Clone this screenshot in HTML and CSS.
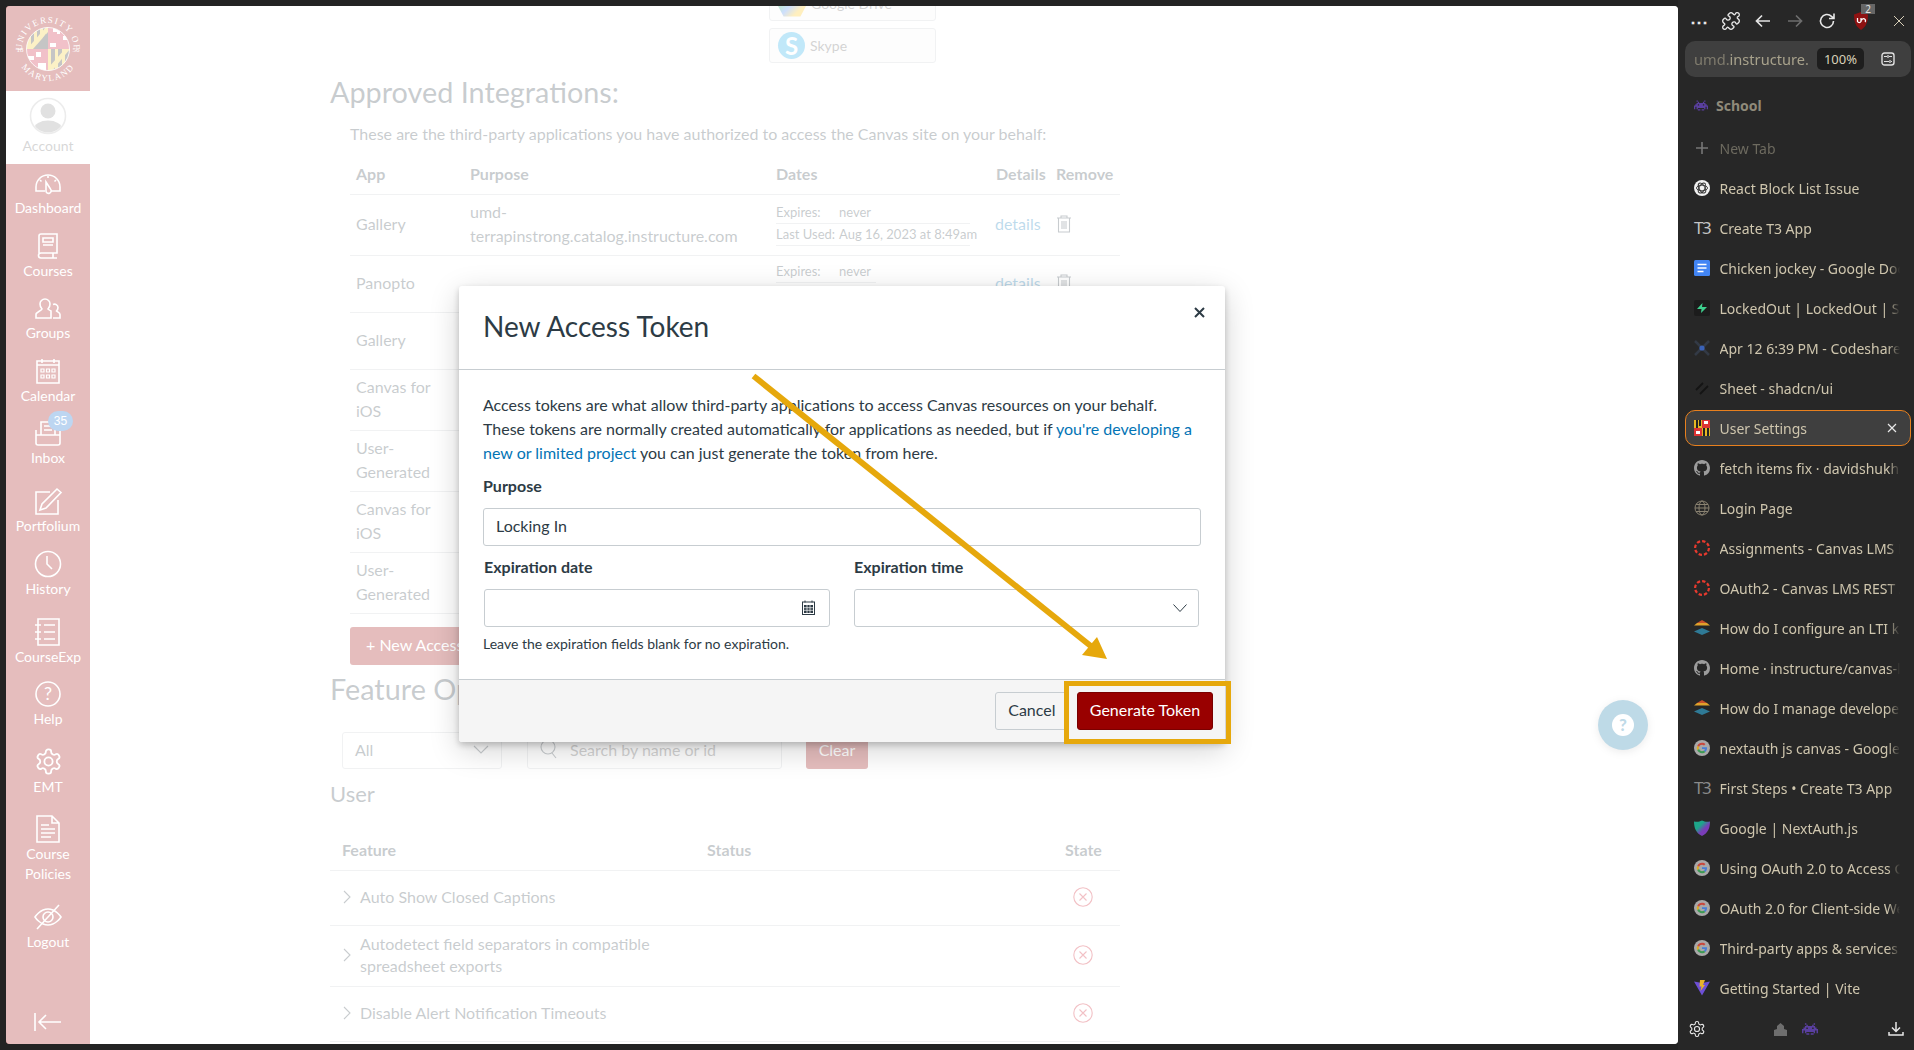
FILE: index.html
```html
<!DOCTYPE html>
<html lang="en">
<head>
    <meta charset="UTF-8">
    <meta name="viewport" content="width=device-width, initial-scale=1.0">
    <title>User Settings</title>
    <link rel="stylesheet" href="styles.css">
</head>
<body>

<svg class="defs" width="0" height="0">
    <symbol id="gear" viewBox="0 0 24 24">
        <path d="M12.22 2h-.44a2 2 0 0 0-2 2v.18a2 2 0 0 1-1 1.73l-.43.25a2 2 0 0 1-2 0l-.15-.08a2 2 0 0 0-2.73.73l-.22.38a2 2 0 0 0 .73 2.73l.15.1a2 2 0 0 1 1 1.72v.51a2 2 0 0 1-1 1.74l-.15.09a2 2 0 0 0-.73 2.73l.22.38a2 2 0 0 0 2.73.73l.15-.08a2 2 0 0 1 2 0l.43.25a2 2 0 0 1 1 1.73V20a2 2 0 0 0 2 2h.44a2 2 0 0 0 2-2v-.18a2 2 0 0 1 1-1.73l.43-.25a2 2 0 0 1 2 0l.15.08a2 2 0 0 0 2.73-.73l.22-.39a2 2 0 0 0-.73-2.73l-.15-.08a2 2 0 0 1-1-1.74v-.5a2 2 0 0 1 1-1.74l.15-.09a2 2 0 0 0 .73-2.73l-.22-.38a2 2 0 0 0-2.73-.73l-.15.08a2 2 0 0 1-2 0l-.43-.25a2 2 0 0 1-1-1.73V4a2 2 0 0 0-2-2z" fill="none" stroke="currentColor" stroke-width="1.500"/>
        <circle cx="12" cy="12" r="3.400" fill="none" stroke="currentColor" stroke-width="1.500"/>
    </symbol>
    <symbol id="invader" viewBox="0 0 11 8">
        <path fill="currentColor" d="M2 0h1v1H2z M8 0h1v1H8z M3 1h1v1H3z M7 1h1v1H7z M2 2h7v1H2z M1 3h2v1H1z M4 3h3v1H4z M8 3h2v1H8z M0 4h11v1H0z M0 5h1v1H0z M2 5h7v1H2z M10 5h1v1h-1z M0 6h1v1H0z M2 6h1v1H2z M8 6h1v1H8z M10 6h1v1h-1z M3 7h2v1H3z M6 7h2v1H6z"/>
    </symbol>
    <symbol id="github" viewBox="0 0 16 16">
        <path fill="#9c9c9c" d="M8 0C3.58 0 0 3.58 0 8c0 3.54 2.29 6.53 5.47 7.59.4.07.55-.17.55-.38 0-.19-.01-.82-.01-1.49-2.01.37-2.53-.49-2.69-.94-.09-.23-.48-.94-.82-1.13-.28-.15-.68-.52-.01-.53.63-.01 1.08.58 1.23.82.72 1.21 1.87.87 2.33.66.07-.52.28-.87.51-1.07-1.78-.2-3.64-.89-3.64-3.95 0-.87.31-1.59.82-2.15-.08-.2-.36-1.02.08-2.12 0 0 .67-.21 2.2.82.64-.18 1.32-.27 2-.27.68 0 1.36.09 2 .27 1.53-1.04 2.2-.82 2.2-.82.44 1.1.16 1.92.08 2.12.51.56.82 1.27.82 2.15 0 3.07-1.87 3.75-3.65 3.95.29.25.54.73.54 1.48 0 1.07-.01 1.93-.01 2.2 0 .21.15.46.55.38A8.013 8.013 0 0016 8c0-4.42-3.58-8-8-8z"/>
    </symbol>
    <symbol id="google" viewBox="0 0 64 64">
        <circle cx="32" cy="32" r="32" fill="#a9a9a9"/>
        <g transform="translate(11 11) scale(.875)">
            <path fill="#c9473c" d="M24 9.500c3.54 0 6.71 1.22 9.21 3.6l6.85-6.85C35.9 2.38 30.47 0 24 0 14.62 0 6.51 5.38 2.56 13.22l7.98 6.19C12.43 13.72 17.74 9.500 24 9.500z"/>
            <path fill="#4a7fd6" d="M46.98 24.55c0-1.57-.15-3.09-.38-4.55H24v9.02h12.94c-.58 2.96-2.26 5.48-4.78 7.18l7.73 6c4.51-4.18 7.09-10.36 7.09-17.65z"/>
            <path fill="#d9a92a" d="M10.53 28.59c-.48-1.45-.76-2.99-.76-4.59s.27-3.14.76-4.59l-7.98-6.19C.92 16.46 0 20.12 0 24c0 3.88.92 7.54 2.56 10.78l7.97-6.19z"/>
            <path fill="#3d9a55" d="M24 48c6.48 0 11.93-2.13 15.89-5.81l-7.73-6c-2.15 1.45-4.92 2.3-8.16 2.3-6.26 0-11.57-4.22-13.47-9.91l-7.98 6.19C6.51 42.62 14.62 48 24 48z"/>
        </g>
    </symbol>
    <symbol id="canvas" viewBox="0 0 16 16">
        <circle cx="8" cy="8" r="6.900" fill="none" stroke="#e63a2e" stroke-width="2.200" stroke-dasharray="3.400 2"/>
    </symbol>
    <symbol id="layers" viewBox="0 0 16 16">
        <path fill="#c9502c" d="M8 0l5 3H3z"/>
        <path fill="#e0a12b" d="M3 3h10l3 2.500H0z"/>
        <path fill="#2f7a96" d="M8 8l8 3.500L8 15l-8-3.500z"/>
    </symbol>
</svg>

<div class="frame">
    <div class="page">
        <nav class="nav">
            <div class="nav-logo">
                <svg width="84" height="85" viewBox="0 0 84 85">
                    <defs>
                        <clipPath id="globe"><circle cx="42" cy="43" r="21.500"/></clipPath>
                        <path id="arc-top" d="M16 43 A26 26 0 0 1 68 43"/>
                        <path id="arc-bottom" d="M10 43 A32 32 0 0 0 74 43"/>
                    </defs>
                    <g clip-path="url(#globe)">
                        <rect x="20" y="21" width="22" height="22" fill="#f2c824"/>
                        <path d="M25 21h3v22h-3z M31 21h3v22h-3z M37 21h3v22h-3z" fill="#222"/>
                        <path d="M21 43 L40 21 H42 V25 L29 43z" fill="#f2c824"/>
                        <path d="M27 43 L42 26 V43z" fill="#222"/>
                        <rect x="42" y="21" width="22" height="22" fill="#c8102e"/>
                        <path d="M47 22h7v6h-3v-2h-4zM57 30h7v4h-7zM44 37h6v4h-6z" fill="#fff"/>
                        <rect x="20" y="43" width="22" height="22" fill="#c8102e"/>
                        <path d="M22 50h6v4h-6zM30 46h5v5h-5zM32 57h8v8h-8z" fill="#fff"/>
                        <rect x="42" y="43" width="22" height="22" fill="#f2c824"/>
                        <path d="M45 43h4v22h-4z M52 43h4v22h-4z M59 43h4v22h-4z" fill="#222"/>
                        <path d="M42 62 L59 43 H64 L46 65 H42z" fill="#f2c824"/>
                    </g>
                    <circle cx="42" cy="43" r="21.500" fill="none" stroke="#fff" stroke-width=".8"/>
                    <text class="seal-text"><textPath href="#arc-top" startOffset="50%" text-anchor="middle">UNIVERSITY OF</textPath></text>
                    <text class="seal-text"><textPath href="#arc-bottom" startOffset="50%" text-anchor="middle">MARYLAND</textPath></text>
                    <text class="seal-year" x="14" y="46" text-anchor="middle">18</text>
                    <text class="seal-year" x="70" y="46" text-anchor="middle">56</text>
                </svg>
            </div>
            <a class="nav-account">
                <svg width="38" height="38" viewBox="0 0 38 38">
                    <defs><clipPath id="avatar"><circle cx="19" cy="19" r="16.500"/></clipPath></defs>
                    <circle cx="19" cy="19" r="17.500" fill="#fff" stroke="#b6b6b6" stroke-width="1.600"/>
                    <g clip-path="url(#avatar)" fill="#8c8c8c">
                        <circle cx="19" cy="14" r="7.500"/>
                        <ellipse cx="19" cy="32" rx="14" ry="8.500"/>
                    </g>
                </svg>
                <span class="nav-label">Account</span>
            </a>
            <a class="nav-item nav-item-first">
                <span class="nav-icon"><svg width="28" height="26" viewBox="0 0 28 26"><path d="M11 21H2v-4a12 12 0 0 1 24 0v4h-9M14 6v2M6 10l1.500 1.500M22 10l-1.500 1.500"/><path d="M12 12l4.500 7a2.600 2.600 0 1 1-4.500 1.500z"/></svg></span>
                <span class="nav-label">Dashboard</span>
            </a>
            <a class="nav-item">
                <span class="nav-icon"><svg width="28" height="26" viewBox="0 0 28 26"><path d="M5 20V3a2 2 0 0 1 2-2h16v19H7a2.500 2.500 0 0 0 0 5h16M19 25v-5"/><path d="M9 5h10v4H9zM9 12h10"/></svg></span>
                <span class="nav-label">Courses</span>
            </a>
            <a class="nav-item">
                <span class="nav-icon"><svg width="28" height="26" viewBox="0 0 28 26"><path d="M2 23v-3.500c0-2.500 5-3.500 6-5.500-1.500-1.500-2-3-2-5a5 5 0 0 1 10 0c0 2-.5 3.500-2 5 1 1 2 1.500 3 2v7H2z"/><path d="M19 9.500a3.500 3.500 0 0 1 5 3c0 1.500-.5 2.500-1.500 3.500 1 1 3.500 1.500 3.500 3.500v3.500h-7"/></svg></span>
                <span class="nav-label">Groups</span>
            </a>
            <a class="nav-item">
                <span class="nav-icon"><svg width="28" height="26" viewBox="0 0 28 26"><path d="M3 3h22v22H3zM3 7h22M8 1v4M20 1v4"/><path class="dots" d="M7 11h3v3H7zM12.500 11h3v3h-3zM18 11h3v3h-3zM7 17h3v3H7zM12.500 17h3v3h-3zM18 17h3v3h-3z"/></svg></span>
                <span class="nav-label">Calendar</span>
            </a>
            <a class="nav-item">
                <span class="nav-icon">
                    <svg width="28" height="26" viewBox="0 0 28 26"><path d="M7 15V2h14v13M2 10v13a2 2 0 0 0 2 2h20a2 2 0 0 0 2-2V10M2 15h24M10 6h8M10 10h8"/></svg>
                    <span class="badge">35</span>
                </span>
                <span class="nav-label">Inbox</span>
            </a>
            <a class="nav-item nav-item-portfolium">
                <span class="nav-icon"><svg width="28" height="26" viewBox="0 0 28 26"><path d="M16 4H2v22h22V12"/><path d="M23 1l4 3.500L12 20l-6 2 2-6z"/></svg></span>
                <span class="nav-label">Portfolium</span>
            </a>
            <a class="nav-item nav-item-short">
                <span class="nav-icon"><svg width="28" height="26" viewBox="0 0 28 26"><circle cx="14" cy="13" r="12.500"/><path d="M13 5v8l5 5"/></svg></span>
                <span class="nav-label">History</span>
            </a>
            <a class="nav-item nav-item-tall">
                <span class="nav-icon"><svg width="28" height="26" viewBox="0 0 28 26"><path d="M4 0h21v26H4zM1 6h6M1 13h6M1 20h6M10 6h11M10 13h11M10 20h11"/></svg></span>
                <span class="nav-label">CourseExp</span>
            </a>
            <a class="nav-item">
                <span class="nav-icon"><svg width="28" height="26" viewBox="0 0 28 26"><circle cx="14" cy="13" r="12"/><text class="icon-glyph" x="14" y="19" text-anchor="middle">?</text></svg></span>
                <span class="nav-label">Help</span>
            </a>
            <a class="nav-item nav-item-tall">
                <span class="nav-icon"><svg width="29" height="29"><use href="#gear"/></svg></span>
                <span class="nav-label">EMT</span>
            </a>
            <a class="nav-item nav-item-tall">
                <span class="nav-icon"><svg width="28" height="26" viewBox="0 0 28 26"><path d="M3 0h15l7 7v19H3zM18 0v7h7M7 9h8M7 13h14M7 17h14M7 21h10"/></svg></span>
                <span class="nav-label">Course Policies</span>
            </a>
            <a class="nav-item nav-item-tall">
                <span class="nav-icon"><svg width="28" height="26" viewBox="0 0 28 26"><path d="M1 13s5-8 13-8 13 8 13 8-5 8-13 8-13-8-13-8z"/><circle cx="14" cy="13" r="5"/><path d="M25 1L3 25"/></svg></span>
                <span class="nav-label">Logout</span>
            </a>
            <a class="nav-collapse">
                <svg width="28" height="20" viewBox="0 0 28 20"><path d="M1 1v18M27 10H5M12 3l-7 7 7 7"/></svg>
            </a>
        </nav>

        <main class="content">
            <div class="service-list">
                <div class="service-box"><span class="drive-mark"></span><span class="service-name">Google Drive</span></div>
                <div class="service-box">
                    <span class="skype-mark">S</span>
                    <span class="service-name">Skype</span>
                </div>
            </div>

            <h2 class="page-title">Approved Integrations:</h2>
            <p class="intro">These are the third-party applications you have authorized to access the Canvas site on your behalf:</p>

            <table class="apps-table">
                <colgroup>
                    <col class="col-app"><col class="col-purpose"><col class="col-dates"><col class="col-details"><col class="col-remove">
                </colgroup>
                <thead>
                    <tr><th>App</th><th>Purpose</th><th>Dates</th><th>Details</th><th>Remove</th></tr>
                </thead>
                <tbody>
                    <tr>
                        <td>Gallery</td>
                        <td>umd-terrapinstrong.catalog.instructure.com</td>
                        <td>
                            <div class="date-line"><span class="date-key">Expires:</span><span>never</span></div>
                            <div class="date-line"><span class="date-key">Last Used:</span><span>Aug 16, 2023 at 8:49am</span></div>
                        </td>
                        <td><a class="details-link">details</a></td>
                        <td><svg class="trash" width="16" height="18" viewBox="0 0 16 18"><path d="M1 3h14M5 3V1h6v2M2.500 3v14h11V3M6 6v8M8 6v8M10 6v8"/></svg></td>
                    </tr>
                    <tr>
                        <td>Panopto</td>
                        <td></td>
                        <td>
                            <div class="date-line date-line-short"><span class="date-key">Expires:</span><span>never</span></div>
                            <div class="date-line"><span class="date-key">Last Used:</span><span></span></div>
                        </td>
                        <td><a class="details-link">details</a></td>
                        <td><svg class="trash" width="16" height="18" viewBox="0 0 16 18"><path d="M1 3h14M5 3V1h6v2M2.500 3v14h11V3M6 6v8M8 6v8M10 6v8"/></svg></td>
                    </tr>
                    <tr class="row-single"><td>Gallery</td><td></td><td></td><td></td><td></td></tr>
                    <tr><td>Canvas for iOS</td><td></td><td></td><td></td><td></td></tr>
                    <tr><td>User-Generated</td><td></td><td></td><td></td><td></td></tr>
                    <tr><td>Canvas for iOS</td><td></td><td></td><td></td><td></td></tr>
                    <tr><td>User-Generated</td><td></td><td></td><td></td><td></td></tr>
                </tbody>
            </table>

            <button class="btn-new">+ New Access Token</button>

            <h2 class="page-title feature-title">Feature Options</h2>

            <div class="filters">
                <div class="filter-select">All
                    <svg class="chevron" width="16" height="9" viewBox="0 0 16 9"><path d="M1 1l7 7 7-7"/></svg>
                </div>
                <div class="filter-search">
                    <svg class="search-icon" width="18" height="20" viewBox="0 0 18 20"><circle cx="8" cy="8" r="7"/><path d="M12 14l4 5"/></svg>
                    Search by name or id
                </div>
                <button class="btn-clear">Clear</button>
            </div>

            <h3 class="section-title">User</h3>

            <table class="feature-table">
                <colgroup><col class="col-feature"><col class="col-status"><col class="col-state"></colgroup>
                <thead>
                    <tr><th>Feature</th><th>Status</th><th>State</th></tr>
                </thead>
                <tbody>
                    <tr>
                        <td><div class="feature-name"><svg class="row-chevron" width="8" height="14" viewBox="0 0 8 14"><path d="M1 1l6 6-6 6"/></svg>Auto Show Closed Captions</div></td>
                        <td></td>
                        <td><svg class="state-off" width="20" height="20" viewBox="0 0 20 20"><circle cx="10" cy="10" r="9.200"/><path d="M6.500 6.500l7 7M13.500 6.500l-7 7"/></svg></td>
                    </tr>
                    <tr>
                        <td><div class="feature-name"><svg class="row-chevron" width="8" height="14" viewBox="0 0 8 14"><path d="M1 1l6 6-6 6"/></svg><span>Autodetect field separators in compatible spreadsheet exports</span></div></td>
                        <td></td>
                        <td><svg class="state-off" width="20" height="20" viewBox="0 0 20 20"><circle cx="10" cy="10" r="9.200"/><path d="M6.500 6.500l7 7M13.500 6.500l-7 7"/></svg></td>
                    </tr>
                    <tr>
                        <td><div class="feature-name"><svg class="row-chevron" width="8" height="14" viewBox="0 0 8 14"><path d="M1 1l6 6-6 6"/></svg>Disable Alert Notification Timeouts</div></td>
                        <td></td>
                        <td><svg class="state-off" width="20" height="20" viewBox="0 0 20 20"><circle cx="10" cy="10" r="9.200"/><path d="M6.500 6.500l7 7M13.500 6.500l-7 7"/></svg></td>
                    </tr>
                </tbody>
            </table>
        </main>

        <div class="help-fab"><span class="help-fab-dot">?</span></div>

        <div class="overlay">
            <div class="modal">
                <header class="modal-head">
                    <h2>New Access Token</h2>
                    <svg class="modal-close" width="11" height="11" viewBox="0 0 11 11"><path d="M1 1l9 9M10 1l-9 9"/></svg>
                </header>
                <div class="modal-body">
                    <p class="modal-text">Access tokens are what allow third-party applications to access Canvas resources on your behalf. These tokens are normally created automatically for applications as needed, but if <a class="link">you're developing a new or limited project</a> you can just generate the token from here.</p>
                    <label class="field-label">Purpose</label>
                    <input class="field-input" type="text" value="Locking In">
                    <div class="expiry-row">
                        <div>
                            <label class="field-label">Expiration date</label>
                            <div class="field-box">
                                <svg class="cal-icon" width="13" height="15" viewBox="0 0 13 15"><rect x=".5" y="2" width="12" height="12.500" fill="none" stroke="#2d3b45"/><path d="M3 .5v2M10 .5v2" stroke="#2d3b45"/><path fill="#2d3b45" d="M2 5h9v8H2z"/><path d="M5 5v8M8 5v8M2 7.700h9M2 10.300h9" stroke="#fff" stroke-width=".7"/></svg>
                            </div>
                        </div>
                        <div>
                            <label class="field-label">Expiration time</label>
                            <div class="field-box">
                                <svg class="modal-chevron" width="14" height="8" viewBox="0 0 14 8"><path d="M.5.500L7 7.500 13.500.500"/></svg>
                            </div>
                        </div>
                    </div>
                    <p class="field-help">Leave the expiration fields blank for no expiration.</p>
                </div>
                <footer class="modal-foot">
                    <button class="btn-cancel">Cancel</button>
                    <button class="btn-generate">Generate Token</button>
                </footer>
            </div>
        </div>
    </div>

    <aside class="panel">
        <div class="toolbar">
            <span class="tool dots-tool">&#8943;</span>
            <span class="tool"><svg width="20" height="20" viewBox="0 0 24 24"><path d="M19.439 7.850c-.049.322.059.648.289.878l1.568 1.568c.47.47.706 1.087.706 1.704s-.235 1.233-.706 1.704l-1.611 1.611a.98.98 0 0 1-.837.276c-.47-.07-.802-.48-.968-.925a2.501 2.501 0 1 0-3.214 3.214c.446.166.855.497.925.968a.979.979 0 0 1-.276.837l-1.61 1.61a2.404 2.404 0 0 1-1.705.707 2.402 2.402 0 0 1-1.704-.706l-1.568-1.568a1.026 1.026 0 0 0-.877-.29c-.493.074-.84.504-1.02.968a2.500 2.500 0 1 1-3.237-3.237c.464-.18.894-.527.967-1.020a1.026 1.026 0 0 0-.289-.877l-1.568-1.568A2.402 2.402 0 0 1 1.998 12c0-.617.236-1.234.706-1.704L4.230 8.770c.24-.24.581-.353.917-.303.515.077.877.528 1.073 1.010a2.500 2.500 0 1 0 3.259-3.259c-.482-.196-.933-.558-1.010-1.073-.05-.336.062-.676.303-.917l1.525-1.525A2.402 2.402 0 0 1 12 1.998c.617 0 1.234.236 1.704.706l1.568 1.568c.23.23.556.338.877.29.493-.074.84-.504 1.020-.968a2.500 2.500 0 1 1 3.237 3.237c-.464.18-.894.527-.967 1.020Z" fill="none" stroke="#e8e8e8" stroke-width="1.600"/></svg></span>
            <span class="tool"><svg width="16" height="14" viewBox="0 0 16 14"><path d="M15 7H2M7 1.500L1.500 7 7 12.500" fill="none" stroke="#e4e4e4" stroke-width="1.700"/></svg></span>
            <span class="tool"><svg width="16" height="14" viewBox="0 0 16 14"><path d="M1 7h13M9 1.500L14.500 7 9 12.500" fill="none" stroke="#6e6e6e" stroke-width="1.700"/></svg></span>
            <span class="tool"><svg width="18" height="18" viewBox="0 0 18 18"><path d="M15.500 9a6.500 6.500 0 1 1-2-4.700L16 6.500M16 1.500v5h-5" fill="none" stroke="#e8e8e8" stroke-width="1.600"/></svg></span>
            <span class="tool tool-ublock">
                <svg width="16" height="18" viewBox="0 0 16 18"><path d="M8 0l7 2.500c0 7-1.500 12-7 15.500C2.500 14.500 1 9.500 1 2.500z" fill="#8e1212"/><path d="M4.500 6v3.500a2 2 0 0 0 3.500 0V6M8.500 8.500a2 2 0 1 1 3.500 1.500" fill="none" stroke="#fff" stroke-width="1.300"/></svg>
                <span class="tool-count">2</span>
            </span>
            <span class="tool tool-close"><svg width="12" height="12" viewBox="0 0 12 12"><path d="M1 1l10 10M11 1L1 11" fill="none" stroke="#d8cfb8" stroke-width="1"/></svg></span>
        </div>

        <div class="urlbar">
            <span class="url-text"><span class="url-dim">umd.</span>instructure.</span>
            <span class="zoom-pill">100%</span>
            <svg width="14" height="14" viewBox="0 0 14 14"><rect x="1" y="1" width="12" height="12" rx="2.500" fill="none" stroke="#e0e0e0" stroke-width="1.400"/><path d="M3 4.500h3M8 4.500h3M3 9.500h5M10 9.500h1M7 3v3M9 8v3" fill="none" stroke="#e0e0e0" stroke-width="1.200"/></svg>
        </div>

        <div class="workspace"><svg class="invader-icon" width="14" height="11"><use href="#invader"/></svg>School</div>

        <div class="tab new-tab">
            <svg class="fav" width="16" height="16" viewBox="0 0 16 16"><path d="M8 2v12M2 8h12" stroke="#777" stroke-width="1.600"/></svg>
            <span class="tab-title">New Tab</span>
        </div>
        <div class="tab">
            <svg class="fav" width="16" height="16" viewBox="0 0 16 16"><circle cx="8" cy="8" r="8" fill="#f2f2f2"/><g fill="none" stroke="#333" stroke-width=".9"><ellipse cx="8" cy="8" rx="5.500" ry="2.800"/><ellipse cx="8" cy="8" rx="5.500" ry="2.800" transform="rotate(60 8 8)"/><ellipse cx="8" cy="8" rx="5.500" ry="2.800" transform="rotate(120 8 8)"/></g></svg>
            <span class="tab-title">React Block List Issue</span>
        </div>
        <div class="tab"><span class="fav fav-t3">T3</span><span class="tab-title">Create T3 App</span></div>
        <div class="tab">
            <svg class="fav" width="16" height="16" viewBox="0 0 16 16"><rect width="16" height="16" rx="1.500" fill="#4285f4"/><path d="M3.500 4.500h9M3.500 8h9M3.500 11.500h6" stroke="#fff" stroke-width="1.500"/></svg>
            <span class="tab-title">Chicken jockey - Google Docs</span>
        </div>
        <div class="tab">
            <svg class="fav" width="16" height="16" viewBox="0 0 16 16"><rect width="16" height="16" rx="2" fill="#1c1c1c"/><path d="M8.500 3L3 9h4.500l-.5 4 6-6H8z" fill="#3ecf8e"/></svg>
            <span class="tab-title">LockedOut | LockedOut | Supabase</span>
        </div>
        <div class="tab">
            <svg class="fav" width="16" height="16" viewBox="0 0 16 16"><path d="M1 1l14 14M15 1L1 15" stroke="#333a46" stroke-width="2.500"/><circle cx="8" cy="8" r="2.600" fill="#3a62b8"/></svg>
            <span class="tab-title">Apr 12 6:39 PM - Codeshare</span>
        </div>
        <div class="tab">
            <svg class="fav" width="16" height="16" viewBox="0 0 16 16"><path d="M9 3l-7 7M14 6l-8 8" stroke="#141414" stroke-width="1.800"/></svg>
            <span class="tab-title">Sheet - shadcn/ui</span>
        </div>
        <div class="tab tab-active">
            <svg class="fav" width="16" height="16" viewBox="0 0 16 16"><rect width="16" height="16" fill="#f4f4f4"/><path d="M0 0h8v8H0z" fill="#e5b622"/><path d="M2 0h2v8H2zM5 0h2v6H5z" fill="#222"/><path d="M8 0h8v8H8z" fill="#d33"/><path d="M0 8h8v8H0z" fill="#d33"/><path d="M8 8h8v8H8z" fill="#e5b622"/><path d="M9 8h2v8H9zM13 8h2v8h-2z" fill="#222"/><path d="M10 1h4v3h-4zM2 11h4v3H2z" fill="#fff"/></svg>
            <span class="tab-title">User Settings</span>
            <svg class="tab-close" width="10" height="10" viewBox="0 0 10 10"><path d="M1 1l8 8M9 1L1 9" stroke="#e8e8e8" stroke-width="1.200"/></svg>
        </div>
        <div class="tab"><svg class="fav" width="16" height="16"><use href="#github"/></svg><span class="tab-title">fetch items fix · davidshukhin/lockedout</span></div>
        <div class="tab">
            <svg class="fav" width="16" height="16" viewBox="0 0 16 16"><g fill="none" stroke="#8a8271" stroke-width="1"><circle cx="8" cy="8" r="7"/><ellipse cx="8" cy="8" rx="3" ry="7"/><path d="M1 8h14M2 4.500h12M2 11.500h12"/></g></svg>
            <span class="tab-title">Login Page</span>
        </div>
        <div class="tab"><svg class="fav" width="16" height="16"><use href="#canvas"/></svg><span class="tab-title">Assignments - Canvas LMS REST API</span></div>
        <div class="tab"><svg class="fav" width="16" height="16"><use href="#canvas"/></svg><span class="tab-title">OAuth2 - Canvas LMS REST API</span></div>
        <div class="tab"><svg class="fav" width="16" height="16"><use href="#layers"/></svg><span class="tab-title">How do I configure an LTI key</span></div>
        <div class="tab"><svg class="fav" width="16" height="16"><use href="#github"/></svg><span class="tab-title">Home · instructure/canvas-lms</span></div>
        <div class="tab"><svg class="fav" width="16" height="16"><use href="#layers"/></svg><span class="tab-title">How do I manage developer keys</span></div>
        <div class="tab"><svg class="fav" width="16" height="16"><use href="#google"/></svg><span class="tab-title">nextauth js canvas - Google Search</span></div>
        <div class="tab"><span class="fav fav-t3 fav-t3-dim">T3</span><span class="tab-title">First Steps • Create T3 App</span></div>
        <div class="tab">
            <svg class="fav" width="16" height="16" viewBox="0 0 16 16"><defs><linearGradient id="shield" x1="0" y1="0" x2="1" y2="1"><stop offset=".35" stop-color="#1ea58a"/><stop offset=".6" stop-color="#7a3db8"/></linearGradient></defs><path d="M0 1.500C3 2 5 2 8 0.500 11 2 13 2 16 1.500 16 8 14 13 8 16 2 13 0 8 0 1.500z" fill="url(#shield)"/></svg>
            <span class="tab-title">Google | NextAuth.js</span>
        </div>
        <div class="tab"><svg class="fav" width="16" height="16"><use href="#google"/></svg><span class="tab-title">Using OAuth 2.0 to Access Google APIs</span></div>
        <div class="tab"><svg class="fav" width="16" height="16"><use href="#google"/></svg><span class="tab-title">OAuth 2.0 for Client-side Web Apps</span></div>
        <div class="tab"><svg class="fav" width="16" height="16"><use href="#google"/></svg><span class="tab-title">Third-party apps &amp; services</span></div>
        <div class="tab">
            <svg class="fav" width="16" height="16" viewBox="0 0 16 16"><path d="M0 1.500l8 1.500 8-1.500L8 15.500z" fill="#6d4fd6"/><path d="M6 0h5L9 5h2L6.500 11 7.500 6.500H5.500z" fill="#e8b32a"/></svg>
            <span class="tab-title">Getting Started | Vite</span>
        </div>

        <div class="panel-foot">
            <svg class="foot-gear" width="18" height="18"><use href="#gear"/></svg>
            <div class="foot-spaces">
                <svg width="13" height="13" viewBox="0 0 13 13"><path d="M0 13V7l3-1V3l3.500-3L10 3v3l3 1v6z" fill="#6e6e6e"/></svg>
                <svg class="invader-icon" width="16" height="12"><use href="#invader"/></svg>
            </div>
            <svg width="16" height="16" viewBox="0 0 16 16"><path d="M8 1v9M4 6.500L8 10.500 12 6.500M1 11v3h14v-3" fill="none" stroke="#e8e8e8" stroke-width="1.500"/></svg>
        </div>
    </aside>
</div>

<svg class="annotation" width="1914" height="1050" viewBox="0 0 1914 1050">
    <path class="annotation-line" d="M753.500 376 L1092 647"/>
    <path class="annotation-head" d="M1107 659 L1097 637 L1082 655z"/>
    <rect class="annotation-box" x="1066.500" y="683.500" width="162" height="58"/>
</svg>

</body>
</html>
```

FILE: styles.css
```css
* {
    box-sizing: border-box;
}
html, body {
    margin: 0;
    height: 100%;
}
body {
    background-color: #232323;
    font-family: Lato, "Open Sans", sans-serif;
    overflow: hidden;
}
.defs {
    position: absolute;
}

/* window */
.frame {
    display: flex;
    height: 1050px;
    padding: 6px 0 6px 6px;
}
.page {
    position: relative;
    display: flex;
    width: 1672px;
    flex: none;
    overflow: hidden;
    background-color: #fff;
    border-radius: 4px;
    color: #2d3b45;
}

/* canvas left nav */
.nav {
    display: flex;
    flex-direction: column;
    width: 84px;
    flex: none;
    background-color: #990000;
    color: #fff;
}
.nav-logo {
    height: 85px;
}
.seal-text {
    font-family: "Liberation Serif", serif;
    font-size: 9px;
    letter-spacing: 1.3px;
    fill: #fff;
}
.seal-year {
    font-family: "Liberation Serif", serif;
    font-size: 7px;
    fill: #fff;
}
.nav-account {
    display: flex;
    flex-direction: column;
    align-items: center;
    height: 73px;
    padding-top: 6px;
    background-color: #fff;
    color: #666;
}
.nav-account .nav-label {
    margin-top: 1px;
}
.nav-item {
    display: flex;
    flex-direction: column;
    align-items: center;
    padding: 7px 0 7.5px;
}
.nav-item-first {
    margin-top: -0.7px;
}
.nav-item-portfolium {
    padding-top: 12.5px;
}
.nav-item-short {
    padding-top: 7.2px;
}
.nav-item-tall {
    padding-top: 12px;
}
.nav-icon {
    position: relative;
    display: flex;
    justify-content: center;
    align-items: center;
    height: 26px;
    margin-bottom: 2px;
}
.nav-icon svg, .nav-collapse svg {
    fill: none;
    stroke: #fff;
    stroke-width: 1.6;
    overflow: visible;
}
.nav-icon .dots {
    stroke-width: 1.2;
}
.icon-glyph {
    font-family: Lato, sans-serif;
    font-size: 18px;
    fill: #fff;
    stroke: none;
}
.nav-label {
    width: 80px;
    font-size: 14px;
    line-height: 20px;
    text-align: center;
}
.badge {
    position: absolute;
    top: -9px;
    left: 14px;
    min-width: 25px;
    height: 20px;
    border-radius: 10px;
    background-color: #0060c8;
    color: #fff;
    font-family: "Liberation Sans", sans-serif;
    font-size: 12px;
    line-height: 20px;
    text-align: center;
}
.nav-collapse {
    display: flex;
    justify-content: center;
    margin-top: auto;
    padding-bottom: 12px;
}

/* page behind the dialog */
.content {
    width: 790px;
    margin-left: 240px;
    flex: none;
}
.service-list {
    display: flex;
    flex-direction: column;
    gap: 7px;
    width: 167px;
    margin: -20px 0 0 439px;
}
.service-box {
    display: flex;
    align-items: center;
    gap: 5px;
    height: 35px;
    padding-left: 8px;
    border: 1px solid #c7cdd1;
    border-radius: 3px;
    font-size: 14px;
    background-color: #f5f5f5;
}
.service-name {
    color: #555;
}
.drive-mark {
    width: 28px;
    height: 26px;
    background: linear-gradient(135deg, #0da960 30%, #4285f4 50%, #ffc107 75%);
    clip-path: polygon(30% 0, 70% 0, 100% 60%, 80% 100%, 20% 100%, 0 60%);
}
.skype-mark {
    display: flex;
    justify-content: center;
    align-items: center;
    width: 27px;
    height: 27px;
    border-radius: 50%;
    background-color: #12a5e8;
    color: #fff;
    font-size: 24px;
    font-weight: 700;
}
.page-title {
    margin: 12px 0 0;
    font-size: 28.8px;
    font-weight: 400;
    line-height: 34px;
}
.intro {
    margin: 13px 0 0 20px;
    font-size: 16px;
    line-height: 24px;
}
.apps-table, .feature-table {
    border-collapse: collapse;
    table-layout: fixed;
    font-size: 16px;
}
.apps-table {
    width: 770px;
    margin: 11px 0 0 20px;
}
.col-app { width: 114px; }
.col-purpose { width: 306px; }
.col-dates { width: 220px; }
.col-details { width: 60px; }
.col-remove { width: 70px; }
.apps-table th, .feature-table th {
    height: 37px;
    padding: 0 0 4px 6px;
    border-bottom: 1px solid #c7cdd1;
    font-size: 16px;
    font-weight: 700;
    text-align: left;
}
.apps-table td {
    padding: 5px 6px 7px;
    border-bottom: 1px solid #c7cdd1;
    line-height: 24px;
    vertical-align: middle;
}
.row-single td {
    height: 57px;
}
.apps-table td:nth-child(1) {
    padding-right: 30px;
}
.apps-table td:nth-child(2) {
    padding-right: 50px;
}
.apps-table td:nth-child(3) {
    padding-right: 20px;
}
.apps-table td:nth-child(4) {
    padding-left: 5px;
}
.date-line {
    display: flex;
    height: 22px;
    border-bottom: 1px solid #c7cdd1;
    font-size: 13px;
    line-height: 20px;
    white-space: nowrap;
}
.date-line-short {
    width: 100px;
}
.date-key {
    width: 63px;
    flex: none;
}
.details-link {
    color: #0374b5;
}
.trash, .chevron, .search-icon, .row-chevron {
    fill: none;
    stroke: #2d3b45;
    stroke-width: 1.1;
}
.trash {
    display: block;
}
.btn-new {
    display: block;
    width: 190px;
    height: 38px;
    margin: 13px 0 0 20px;
    padding: 0 0 2px 16px;
    border: 0;
    border-radius: 3px;
    background-color: #990000;
    color: #fff;
    font: 16px Lato, sans-serif;
    text-align: left;
}
.feature-title {
    margin-top: 7px;
}
.filters {
    display: flex;
    margin: 26px 0 0 12px;
}
.filter-select, .filter-search {
    display: flex;
    align-items: center;
    height: 37px;
    padding-bottom: 2px;
    border: 1px solid #c7cdd1;
    border-radius: 3px;
    font-size: 16px;
}
.filter-select {
    justify-content: space-between;
    width: 160px;
    padding-left: 12px;
    padding-right: 12px;
}
.filter-search {
    width: 255px;
    margin-left: 25px;
    padding-left: 12px;
    color: #555;
}
.search-icon {
    margin-right: 12px;
}
.btn-clear {
    width: 62px;
    height: 37px;
    margin-left: 24px;
    padding-bottom: 2px;
    border: 0;
    border-radius: 3px;
    background-color: #990000;
    color: #fff;
    font: 16px Lato, sans-serif;
}
.section-title {
    margin: 11px 0 0;
    font-size: 22px;
    font-weight: 400;
    line-height: 28px;
}
.feature-table {
    width: 790px;
    margin-top: 26px;
}
.col-feature { width: 365px; }
.col-status { width: 358px; }
.col-state { width: 67px; }
.feature-table th {
    padding-left: 12px;
}
.feature-table td {
    height: 55px;
    padding: 6.500px 0 9.500px 13px;
    border-bottom: 1px solid #c7cdd1;
    line-height: 22px;
}
.feature-table td:nth-child(3) {
    padding-left: 20px;
}
.feature-name {
    display: flex;
    align-items: center;
    gap: 9px;
}
.row-chevron {
    flex: none;
}
.state-off {
    display: block;
    fill: none;
    stroke: #cc1122;
    stroke-width: 1.100;
}
.help-fab {
    position: absolute;
    right: 30px;
    bottom: 294px;
    display: flex;
    justify-content: center;
    align-items: center;
    width: 50px;
    height: 50px;
    border-radius: 50%;
    background-color: #0770a3;
    box-shadow: 0 2px 8px rgba(0, 0, 0, 0.3);
}
.help-fab-dot {
    width: 22px;
    height: 22px;
    border-radius: 50%;
    background-color: #fff;
    color: #0770a3;
    font-size: 17px;
    font-weight: 900;
    line-height: 21px;
    text-align: center;
}

/* dialog */
.overlay {
    position: absolute;
    inset: 0;
    display: flex;
    justify-content: center;
    align-items: flex-start;
    padding-top: 280px;
    background-color: rgba(255, 255, 255, 0.74);
}
.modal {
    width: 766px;
    background-color: #fff;
    border-radius: 3px;
    box-shadow: 0 3px 6px rgba(0, 0, 0, 0.2), 0 8px 30px rgba(0, 0, 0, 0.18);
}
.modal-head {
    position: relative;
    display: flex;
    align-items: center;
    height: 84px;
    padding: 0 24px 4px;
    border-bottom: 1px solid #c7cdd1;
}
.modal-head h2 {
    margin: 0;
    font-size: 28px;
    font-weight: 400;
    line-height: 34px;
}
.modal-close {
    position: absolute;
    top: 21px;
    right: 20px;
    fill: none;
    stroke: #2d3b45;
    stroke-width: 2;
}
.modal-body {
    padding: 23px 24px 25px 24px;
}
.modal-text {
    margin: 0;
    font-size: 16px;
    line-height: 24px;
}
.link {
    color: #0374b5;
}
.field-label {
    display: block;
    margin-top: 9px;
    font-size: 16px;
    font-weight: 700;
    line-height: 24px;
}
.field-input, .field-box {
    display: block;
    position: relative;
    width: 100%;
    height: 38px;
    margin-top: 10px;
    border: 1px solid #c7cdd1;
    border-radius: 3px;
    background-color: #fff;
    color: #2d3b45;
}
.field-input {
    padding: 0 12px 4px;
    font: 16px Lato, sans-serif;
}
.expiry-row {
    display: grid;
    grid-template-columns: 346px 345px;
    column-gap: 24px;
    margin-left: 1px;
}
.cal-icon {
    position: absolute;
    top: 10px;
    right: 14px;
}
.modal-chevron {
    position: absolute;
    top: 14px;
    right: 11px;
    fill: none;
    stroke: #2d3b45;
    stroke-width: 1;
}
.field-help {
    margin: 7px 0 0;
    font-size: 14px;
    line-height: 20px;
}
.modal-foot {
    display: flex;
    justify-content: flex-end;
    gap: 8px;
    padding: 12px 12px;
    border-top: 1px solid #c7cdd1;
    background-color: #f5f5f5;
    border-radius: 0 0 3px 3px;
}
.btn-cancel, .btn-generate {
    height: 38px;
    padding: 0 12.500px 3px;
    border-radius: 3px;
    font: 16px Lato, sans-serif;
}
.btn-cancel {
    border: 1px solid #c7cdd1;
    background-color: #f5f5f5;
    color: #2d3b45;
}
.btn-generate {
    width: 136px;
    padding: 0 0 3px;
    border: 1px solid #7a0000;
    background-color: #990000;
    color: #fff;
}

/* browser side panel */
.panel {
    display: flex;
    flex-direction: column;
    flex: 1;
    margin-top: -6px;
    margin-bottom: -6px;
    padding: 0 7px;
    background-color: #272727;
    font-family: "Noto Sans", sans-serif;
    font-size: 14px;
}
.toolbar {
    display: flex;
    align-items: center;
    gap: 8px;
    height: 41px;
    padding-left: 2px;
}
.tool {
    position: relative;
    display: flex;
    justify-content: center;
    align-items: center;
    width: 24px;
    height: 24px;
}
.dots-tool {
    color: #e8e8e8;
    font-size: 18px;
    font-weight: 700;
}
.tool-ublock {
    margin-left: 2px;
}
.tool-close {
    margin-left: 6px;
}
.tool-count {
    position: absolute;
    top: -5px;
    left: 12px;
    width: 14px;
    height: 10px;
    background-color: #666;
    color: #e4e4e4;
    font-size: 10px;
    line-height: 10px;
    text-align: center;
}
.urlbar {
    display: flex;
    align-items: center;
    height: 36px;
    padding: 0 9px;
    border-radius: 10px;
    background-color: #3f3f3f;
}
.url-text {
    width: 123px;
    overflow: hidden;
    white-space: nowrap;
    color: #a8a28c;
    font-size: 14.6px;
    -webkit-mask-image: linear-gradient(to right, #000 calc(100% - 12px), transparent);
    mask-image: linear-gradient(to right, #000 calc(100% - 12px), transparent);
}
.url-dim {
    color: #7f7b6d;
}
.zoom-pill {
    width: 47px;
    height: 22px;
    margin: 0 17px 0 0;
    border-radius: 5px;
    background-color: #1e1e1e;
    color: #d8d0b8;
    font-size: 13px;
    line-height: 22px;
    text-align: center;
}
.workspace {
    display: flex;
    align-items: center;
    gap: 8px;
    height: 45px;
    padding-left: 9px;
    margin-top: 6px;
    color: #8f8a7a;
    font-weight: 700;
}
.invader-icon {
    color: #5a3fa0;
}
.tab {
    display: flex;
    align-items: center;
    gap: 9.500px;
    flex: none;
    height: 40px;
    padding-left: 9px;
    color: #cfc6ae;
}
.new-tab {
    color: #6d6a5f;
}
.tab-active {
    position: relative;
    height: 36px;
    margin: 2px 0;
    padding-left: 8px;
    border: 1.5px solid #e8801e;
    border-radius: 10px;
    background-color: #3f3f3f;
}
.tab-close {
    position: absolute;
    right: 13px;
    top: 12px;
}
.fav {
    flex: none;
    width: 16px;
    height: 16px;
}
.fav-t3 {
    overflow: visible;
    color: #c4c4c4;
    font-size: 17px;
    line-height: 16px;
    letter-spacing: -1.5px;
    white-space: nowrap;
}
.fav-t3-dim {
    color: #8a8a8a;
}
.tab-title {
    width: 180px;
    overflow: hidden;
    white-space: nowrap;
    -webkit-mask-image: linear-gradient(to right, #000 calc(100% - 12px), transparent);
    mask-image: linear-gradient(to right, #000 calc(100% - 12px), transparent);
}
.panel-foot {
    display: flex;
    align-items: center;
    justify-content: space-between;
    height: 40px;
    margin-top: 1px;
    padding: 0 7px 0 3px;
}
.foot-gear {
    color: #e8e8e8;
}
.foot-spaces {
    display: flex;
    align-items: center;
    gap: 15px;
    margin-left: -2px;
}

/* amber arrow and box drawn on the screenshot */
.annotation {
    position: absolute;
    top: 0;
    left: 0;
    pointer-events: none;
}
.annotation-line {
    fill: none;
    stroke: #e6a80c;
    stroke-width: 6;
}
.annotation-head {
    fill: #e6a80c;
}
.annotation-box {
    fill: none;
    stroke: #e6a80c;
    stroke-width: 5;
}
```
